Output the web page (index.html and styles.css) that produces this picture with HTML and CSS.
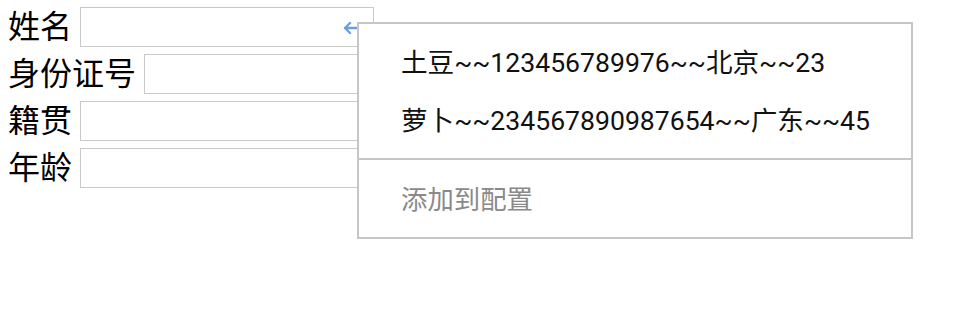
FILE: index.html
```html
<!DOCTYPE html>
<html lang="zh">
<head>
<meta charset="utf-8">
<link rel="stylesheet" href="styles.css">
</head>
<body>
<form class="form">
  <div class="row">
    <label class="label">姓名</label>
    <div class="field">
      <svg class="fill-icon" width="16" height="14" viewBox="0 0 16 14"><path d="M15 7H2M7 2L2 7l5 5" fill="none" stroke="#6b9fe3" stroke-width="2.4" stroke-linecap="round" stroke-linejoin="round"/></svg>
    </div>
  </div>
  <div class="row">
    <label class="label">身份证号</label>
    <div class="field"></div>
  </div>
  <div class="row">
    <label class="label">籍贯</label>
    <div class="field"></div>
  </div>
  <div class="row">
    <label class="label">年龄</label>
    <div class="field"></div>
  </div>
</form>
<div class="popup">
  <ul class="options">
    <li class="option">土豆~~123456789976~~北京~~23</li>
    <li class="option">萝卜~~234567890987654~~广东~~45</li>
  </ul>
  <div class="footer">添加到配置</div>
</div>
</body>
</html>
```
FILE: styles.css
```css
html, body {
  margin: 0;
  padding: 0;
  background: #fff;
}
body {
  padding: 7px 8px 0;
  font-family: "Noto Sans CJK SC", "Noto Sans", sans-serif;
  color: #000;
}
.form {
  display: flex;
  flex-direction: column;
  gap: 7px;
}
.row {
  display: flex;
  align-items: center;
  height: 40px;
}
.label {
  font-size: 32px;
  line-height: 40px;
  margin-right: 8px;
  position: relative;
  top: -3px;
}
.field {
  box-sizing: border-box;
  width: 294px;
  height: 40px;
  border: 1px solid #c9c9c9;
  background: #fff;
  position: relative;
}
.fill-icon {
  position: absolute;
  left: 262px;
  top: 13px;
}
.popup {
  position: absolute;
  left: 357px;
  top: 22px;
  width: 556px;
  box-sizing: border-box;
  border: 2px solid #c6c6c6;
  background: #fff;
}
.options {
  list-style: none;
  margin: 0;
  padding: 7px 0 11px;
  border-bottom: 2px solid #c6c6c6;
}
.option {
  height: 58px;
  display: flex;
  align-items: center;
  padding-left: 42px;
  font-family: Roboto, "Noto Sans CJK SC", sans-serif;
  font-size: 26.6px;
  color: #111;
}
.footer {
  height: 77px;
  display: flex;
  align-items: center;
  padding-left: 42px;
  padding-bottom: 2px;
  box-sizing: border-box;
  font-size: 26.4px;
  color: #8a8a8a;
}
```
